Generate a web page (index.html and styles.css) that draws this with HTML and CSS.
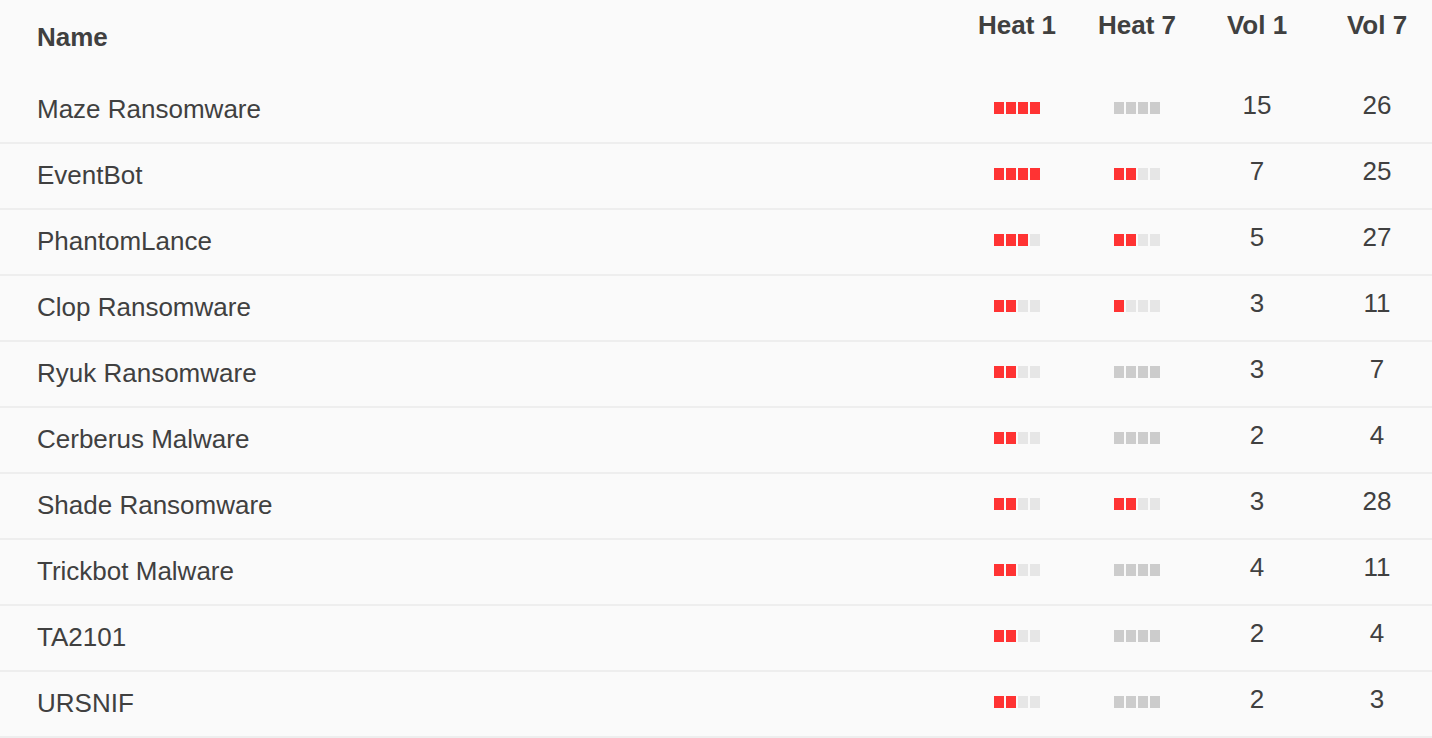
FILE: index.html
```html
<!DOCTYPE html>
<html>
<head>
<meta charset="utf-8">
<link rel="stylesheet" href="styles.css">
</head>
<body>
<div class="table">
  <div class="head">
    <div class="h-name">Name</div>
    <div class="h-col">Heat 1</div>
    <div class="h-col">Heat 7</div>
    <div class="h-col">Vol 1</div>
    <div class="h-col">Vol 7</div>
  </div>

  <div class="row">
    <div class="name">Maze Ransomware</div>
    <div class="cell"><span class="heat"><i class="on"></i><i class="on"></i><i class="on"></i><i class="on"></i></span></div>
    <div class="cell"><span class="heat zero"><i></i><i></i><i></i><i></i></span></div>
    <div class="num">15</div>
    <div class="num">26</div>
  </div>

  <div class="row">
    <div class="name">EventBot</div>
    <div class="cell"><span class="heat"><i class="on"></i><i class="on"></i><i class="on"></i><i class="on"></i></span></div>
    <div class="cell"><span class="heat"><i class="on"></i><i class="on"></i><i></i><i></i></span></div>
    <div class="num">7</div>
    <div class="num">25</div>
  </div>

  <div class="row">
    <div class="name">PhantomLance</div>
    <div class="cell"><span class="heat"><i class="on"></i><i class="on"></i><i class="on"></i><i></i></span></div>
    <div class="cell"><span class="heat"><i class="on"></i><i class="on"></i><i></i><i></i></span></div>
    <div class="num">5</div>
    <div class="num">27</div>
  </div>

  <div class="row">
    <div class="name">Clop Ransomware</div>
    <div class="cell"><span class="heat"><i class="on"></i><i class="on"></i><i></i><i></i></span></div>
    <div class="cell"><span class="heat"><i class="on"></i><i></i><i></i><i></i></span></div>
    <div class="num">3</div>
    <div class="num">11</div>
  </div>

  <div class="row">
    <div class="name">Ryuk Ransomware</div>
    <div class="cell"><span class="heat"><i class="on"></i><i class="on"></i><i></i><i></i></span></div>
    <div class="cell"><span class="heat zero"><i></i><i></i><i></i><i></i></span></div>
    <div class="num">3</div>
    <div class="num">7</div>
  </div>

  <div class="row">
    <div class="name">Cerberus Malware</div>
    <div class="cell"><span class="heat"><i class="on"></i><i class="on"></i><i></i><i></i></span></div>
    <div class="cell"><span class="heat zero"><i></i><i></i><i></i><i></i></span></div>
    <div class="num">2</div>
    <div class="num">4</div>
  </div>

  <div class="row">
    <div class="name">Shade Ransomware</div>
    <div class="cell"><span class="heat"><i class="on"></i><i class="on"></i><i></i><i></i></span></div>
    <div class="cell"><span class="heat"><i class="on"></i><i class="on"></i><i></i><i></i></span></div>
    <div class="num">3</div>
    <div class="num">28</div>
  </div>

  <div class="row">
    <div class="name">Trickbot Malware</div>
    <div class="cell"><span class="heat"><i class="on"></i><i class="on"></i><i></i><i></i></span></div>
    <div class="cell"><span class="heat zero"><i></i><i></i><i></i><i></i></span></div>
    <div class="num">4</div>
    <div class="num">11</div>
  </div>

  <div class="row">
    <div class="name">TA2101</div>
    <div class="cell"><span class="heat"><i class="on"></i><i class="on"></i><i></i><i></i></span></div>
    <div class="cell"><span class="heat zero"><i></i><i></i><i></i><i></i></span></div>
    <div class="num">2</div>
    <div class="num">4</div>
  </div>

  <div class="row">
    <div class="name">URSNIF</div>
    <div class="cell"><span class="heat"><i class="on"></i><i class="on"></i><i></i><i></i></span></div>
    <div class="cell"><span class="heat zero"><i></i><i></i><i></i><i></i></span></div>
    <div class="num">2</div>
    <div class="num">3</div>
  </div>
</div>
</body>
</html>
```

FILE: styles.css
```css
html {
  overflow: hidden;
  background: #fafafa;
}
body {
  margin: 0;
  background: #fafafa;
  font-family: "Liberation Sans", Arial, sans-serif;
  color: #404040;
}
.table {
  width: 1437px;
}
.head,
.row {
  display: grid;
  grid-template-columns: 1fr 120px 120px 120px 120px;
}
.head {
  height: 78px;
  font-weight: bold;
  font-size: 26px;
  line-height: 30px;
}
.h-name {
  padding: 22px 0 0 37px;
}
.h-col {
  padding-top: 10px;
  text-align: center;
}
.row {
  height: 64px;
  border-bottom: 2px solid #eeeeee;
  font-size: 26px;
  line-height: 30px;
}
.name {
  padding: 16px 0 0 37px;
}
.num {
  padding-top: 12px;
  text-align: center;
}
.cell {
  display: flex;
  justify-content: center;
  align-items: flex-start;
  padding-top: 24px;
}
.heat {
  display: flex;
  gap: 2px;
}
.heat i {
  display: block;
  width: 10px;
  height: 12px;
  background: #e6e6e6;
}
.heat i.on {
  background: #ff3333;
}
.heat.zero i {
  background: #cccccc;
}
```
